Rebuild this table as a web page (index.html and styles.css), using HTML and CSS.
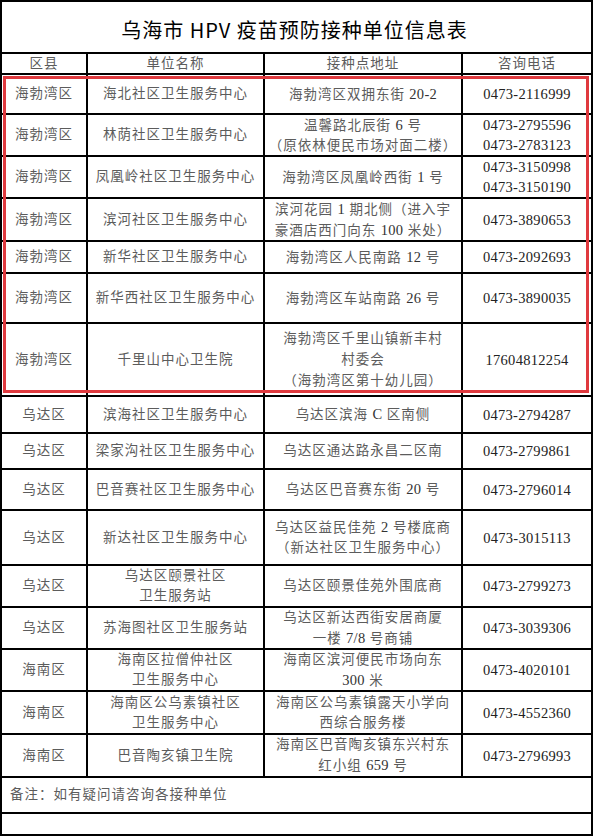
FILE: index.html
```html
<!DOCTYPE html>
<html lang="zh-CN">
<head>
<meta charset="utf-8">
<title>乌海市 HPV 疫苗预防接种单位信息表</title>
<link rel="stylesheet" href="styles.css">
</head>
<body>
<div class="sheet">
  <div class="c title">乌海市 HPV 疫苗预防接种单位信息表</div>

  <div class="c head">区县</div>
  <div class="c head">单位名称</div>
  <div class="c head">接种点地址</div>
  <div class="c head">咨询电话</div>

  <div class="c">海勃湾区</div>
  <div class="c">海北社区卫生服务中心</div>
  <div class="c"><p class="t">海勃湾区双拥东街 <span class="n">20-2</span></p></div>
  <div class="c tel">0473-2116999</div>

  <div class="c">海勃湾区</div>
  <div class="c">林荫社区卫生服务中心</div>
  <div class="c"><p class="t">温馨路北辰街 <span class="n">6</span> 号<br>（原依林便民市场对面二楼）</p></div>
  <div class="c tel"><p class="t">0473-2795596<br>0473-2783123</p></div>

  <div class="c">海勃湾区</div>
  <div class="c">凤凰岭社区卫生服务中心</div>
  <div class="c"><p class="t">海勃湾区凤凰岭西街 <span class="n">1</span> 号</p></div>
  <div class="c tel"><p class="t">0473-3150998<br>0473-3150190</p></div>

  <div class="c">海勃湾区</div>
  <div class="c">滨河社区卫生服务中心</div>
  <div class="c"><p class="t">滨河花园 <span class="n">1</span> 期北侧（进入宇<br>豪酒店西门向东 <span class="n">100</span> 米处）</p></div>
  <div class="c tel">0473-3890653</div>

  <div class="c">海勃湾区</div>
  <div class="c">新华社区卫生服务中心</div>
  <div class="c"><p class="t">海勃湾区人民南路 <span class="n">12</span> 号</p></div>
  <div class="c tel">0473-2092693</div>

  <div class="c">海勃湾区</div>
  <div class="c">新华西社区卫生服务中心</div>
  <div class="c"><p class="t">海勃湾区车站南路 <span class="n">26</span> 号</p></div>
  <div class="c tel">0473-3890035</div>

  <div class="c">海勃湾区</div>
  <div class="c">千里山中心卫生院</div>
  <div class="c tall"><p class="t">海勃湾区千里山镇新丰村<br>村委会<br>（海勃湾区第十幼儿园）</p></div>
  <div class="c tel">17604812254</div>

  <div class="c">乌达区</div>
  <div class="c">滨海社区卫生服务中心</div>
  <div class="c"><p class="t">乌达区滨海 <span class="n">C</span> 区南侧</p></div>
  <div class="c tel">0473-2794287</div>

  <div class="c">乌达区</div>
  <div class="c">梁家沟社区卫生服务中心</div>
  <div class="c">乌达区通达路永昌二区南</div>
  <div class="c tel">0473-2799861</div>

  <div class="c">乌达区</div>
  <div class="c">巴音赛社区卫生服务中心</div>
  <div class="c"><p class="t">乌达区巴音赛东街 <span class="n">20</span> 号</p></div>
  <div class="c tel">0473-2796014</div>

  <div class="c">乌达区</div>
  <div class="c">新达社区卫生服务中心</div>
  <div class="c"><p class="t">乌达区益民佳苑 <span class="n">2</span> 号楼底商<br>（新达社区卫生服务中心）</p></div>
  <div class="c tel">0473-3015113</div>

  <div class="c">乌达区</div>
  <div class="c"><p class="t">乌达区颐景社区<br>卫生服务站</p></div>
  <div class="c">乌达区颐景佳苑外围底商</div>
  <div class="c tel">0473-2799273</div>

  <div class="c">乌达区</div>
  <div class="c">苏海图社区卫生服务站</div>
  <div class="c"><p class="t">乌达区新达西街安居商厦<br>一楼 <span class="n">7/8</span> 号商铺</p></div>
  <div class="c tel">0473-3039306</div>

  <div class="c">海南区</div>
  <div class="c"><p class="t">海南区拉僧仲社区<br>卫生服务中心</p></div>
  <div class="c"><p class="t">海南区滨河便民市场向东<br><span class="n">300</span> 米</p></div>
  <div class="c tel">0473-4020101</div>

  <div class="c">海南区</div>
  <div class="c"><p class="t">海南区公乌素镇社区<br>卫生服务中心</p></div>
  <div class="c"><p class="t">海南区公乌素镇露天小学向<br>西综合服务楼</p></div>
  <div class="c tel">0473-4552360</div>

  <div class="c">海南区</div>
  <div class="c">巴音陶亥镇卫生院</div>
  <div class="c"><p class="t">海南区巴音陶亥镇东兴村东<br>红小组 <span class="n">659</span> 号</p></div>
  <div class="c tel">0473-2796993</div>

  <div class="c note">备注：如有疑问请咨询各接种单位</div>
  <div class="c blank"></div>

  <div class="highlight"></div>
</div>
</body>
</html>
```

FILE: styles.css
```css
html, body {
  margin: 0;
  padding: 0;
  background: #ffffff;
}

.sheet {
  position: relative;
  display: grid;
  width: 591px;
  grid-template-columns: 86px 177px 198px 130px;
  grid-template-rows: 52px 21px 40px 42px 42px 43px 32px 50px 73px 37px 36px 41px 55px 42px 42px 42px 43px 43px 36px 22px;
  border-top: 2px solid #000;
  border-left: 2px solid #000;
}

.c {
  box-sizing: border-box;
  border-right: 2px solid #000;
  border-bottom: 2px solid #000;
  display: flex;
  align-items: center;
  justify-content: center;
  text-align: center;
  font-family: "Liberation Serif", "Noto Sans CJK SC", serif;
  font-size: 13.5px;
  letter-spacing: 1px;
  line-height: 20px;
  color: #5c5c5c;
  white-space: nowrap;
}

.t {
  margin: 0;
  text-align: center;
}

.c.tall {
  line-height: 21px;
}

.n {
  font-size: 14.5px;
  letter-spacing: 0.3px;
  color: #333;
}

.title {
  grid-column: 1 / -1;
  font-family: "Noto Sans CJK SC", "Noto Sans", sans-serif;
  font-size: 20px;
  letter-spacing: 1px;
  color: #000;
  padding-top: 6px;
  padding-right: 4px;
}

.head {
  line-height: 16px;
}

.tel {
  font-size: 14.5px;
  letter-spacing: 0.3px;
  color: #222;
}

.note {
  grid-column: 1 / -1;
  justify-content: flex-start;
  padding-left: 8px;
}

.blank {
  grid-column: 1 / -1;
}

.highlight {
  position: absolute;
  left: 1px;
  top: 74px;
  width: 586px;
  height: 317px;
  box-sizing: border-box;
  border: 3px solid #e0393e;
  pointer-events: none;
}
```
